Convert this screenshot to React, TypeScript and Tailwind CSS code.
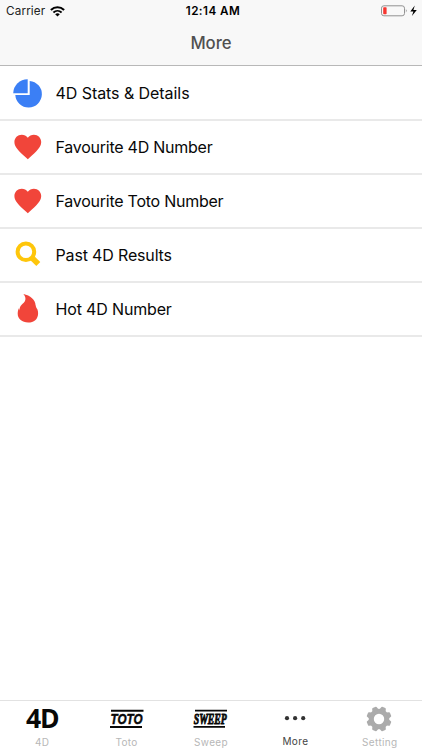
import React from "react";

const Pie = () => (
  <svg width="32" height="32" viewBox="0 0 32 32" fill="#3b7ff5">
    <path d="M15.7 2.2V16.2H1.2A14.3 14.3 0 0 1 15.7 2.2Z" />
    <path d="M17.7 3.9A13.3 13.3 0 1 1 3.3 18H17.7Z" />
  </svg>
);

const Heart = () => (
  <svg width="32" height="32" viewBox="0 0 32 32" fill="#f1453a">
    <path d="M15.8 28.2L13.9 26.5C7 20.4 2.4 16.2 2.4 11.1C2.4 6.9 5.6 3.8 9.8 3.8C12.1 3.8 14.4 4.9 15.8 6.7C17.3 4.9 19.5 3.8 21.9 3.8C26 3.8 29.2 6.9 29.2 11.1C29.2 16.2 24.6 20.4 17.7 26.5Z" />
  </svg>
);

const Search = () => (
  <svg width="32" height="32" viewBox="0 0 32 32" fill="none" stroke="#fec60b">
    <circle cx="13.9" cy="12.8" r="8.3" strokeWidth="4" />
    <path d="M19.4 18.2L26.3 25.1" strokeWidth="5.6" />
  </svg>
);

const Flame = () => (
  <svg width="32" height="32" viewBox="0 0 32 32" fill="#f1453a">
    <path d="M11.4 1C18.2 2.3 23.6 6.9 23.6 12.6C23.6 14.2 23 15.4 23.2 17.2C24.2 16.6 24.5 16 24.6 15.1C25.6 16.6 26.1 18.5 26.1 20.4C26.1 26.2 21.9 29.5 16.1 29.5C10.2 29.5 5.7 26.1 5.7 20.8C5.7 18.6 6.1 16.9 6.9 15.3L7.5 17.5C7.4 12 11.6 11 13 8C14.2 5.4 13 2.8 11.4 1Z" />
    <path d="M21 9C24 13 24.6 15 25.3 17L23 20L19 16Z" />
  </svg>
);

const rows = [
  { icon: <Pie />, label: "4D Stats & Details", tracking: "tracking-[-0.06px]" },
  { icon: <Heart />, label: "Favourite 4D Number", tracking: "tracking-[-0.25px]" },
  { icon: <Heart />, label: "Favourite Toto Number", tracking: "tracking-[-0.25px]" },
  { icon: <Search />, label: "Past 4D Results", tracking: "tracking-[-0.16px]" },
  { icon: <Flame />, label: "Hot 4D Number", tracking: "tracking-[-0.16px]" },
];

const Gear = () => {
  const points = Array.from({ length: 8 }, (_, i) => i * 45);
  return (
    <svg className="mr-[1.4px]" width="26" height="26" viewBox="-13 -13 26 26" fill="#ababab">
      <path
        fillRule="evenodd"
        d="M0-10.3A10.3 10.3 0 1 1 0 10.3A10.3 10.3 0 1 1 0-10.3ZM0-5.2A5.2 5.2 0 1 0 0 5.2A5.2 5.2 0 1 0 0-5.2Z"
      />
      {points.map((a) => (
        <path key={a} transform={`rotate(${a + 22.5})`} d="M-3.4-9L-2.5-11.8Q-2.3-12.5-1.6-12.5H1.6Q2.3-12.5 2.5-11.8L3.4-9Z" />
      ))}
    </svg>
  );
};

const Wordmark = ({ text, serif }: { text: string; serif?: boolean }) => (
  <svg width="44" height="24" viewBox="-4 -2 44 24" overflow="visible">
    <path d={serif ? "M2 1.6H34M.5 17.9H32" : "M2 1.7H34.5M1 18H33"} stroke="#080808" strokeWidth="1.9" />
    <text
      x={serif ? ".8" : "1.5"}
      y="14.9"
      textLength={serif ? "33" : "32"}
      lengthAdjust="spacingAndGlyphs"
      fontFamily={serif ? "Liberation Serif, serif" : "Liberation Sans, sans-serif"}
      fontSize="15.5"
      fontWeight="700"
      fontStyle="italic"
      fill="#080808"
      stroke="#080808"
      strokeWidth={serif ? ".9" : ".5"}
    >
      {text}
    </text>
  </svg>
);

const tabs = [
  {
    label: "4D",
    icon: <span className="font-['Open_Sans',sans-serif] text-[26.5px] font-bold leading-[35px] tracking-[-1.2px] text-[#080808]">4D</span>,
  },
  { label: "Toto", icon: <Wordmark text="TOTO" /> },
  { label: "Sweep", icon: <Wordmark text="SWEEP" serif /> },
  {
    label: "More",
    active: true,
    icon: (
      <svg width="24" height="8" viewBox="0 0 24 8" fill="#333">
        <circle cx="4" cy="3.2" r="2.1" /><circle cx="12.1" cy="3.2" r="2.1" /><circle cx="20.2" cy="3.2" r="2.1" />
      </svg>
    ),
  },
  { label: "Setting", icon: <Gear /> },
];

export default function App() {
  return (
    <div className="flex h-[750px] w-[422px] flex-col overflow-hidden bg-white font-['Inter',sans-serif] text-black">
      <header className="flex h-[66px] shrink-0 flex-col border-b border-[#b8b8b8] bg-[#f8f8f8]">
        <div className="grid h-[22px] grid-cols-3 items-center px-[6px]">
          <div className="flex items-center gap-[5px] text-[11.7px] leading-[22px] tracking-[0.15px] text-[#222]">
            <span>Carrier</span>
            <svg width="15" height="11" viewBox="0 0 15 11" fill="none" stroke="#000">
              <path d="M.9 4C4.7.3 10.3.3 14.1 4" strokeWidth="2.1" />
              <path d="M3.4 6.5C5.8 4.3 9.2 4.3 11.6 6.5" strokeWidth="1.9" />
              <path d="M5.2 8.2Q7.5 6.2 9.8 8.2L7.5 10.5Z" fill="#000" stroke="none" />
            </svg>
          </div>
          <div className="pl-[4px] text-center text-[11.7px] font-semibold leading-[22px] tracking-[0.45px]">12:14 AM</div>
          <svg className="-mr-[2px] justify-self-end" width="37" height="14" viewBox="0 0 37 14">
            <rect x="0.5" y="1.8" width="23" height="10" rx="2.4" fill="none" stroke="#929292" />
            <rect x="2.2" y="3.3" width="3.4" height="7" rx=".7" fill="#f7352f" />
            <path d="M24.9 5.1Q26.6 6.8 24.9 8.5Z" fill="#888" />
            <path d="M33.8 1.5L29.3 7.4H32.4L30.9 12L35.8 5.9H32.4Z" fill="#000" />
          </svg>
        </div>
        <h1 className="pt-[5px] text-center text-[16.7px] font-medium leading-[32px] text-[#505050]">More</h1>
      </header>
      <main className="flex-1">
        {rows.map((r) => (
          <div key={r.label} className="flex h-[54px] items-center border-b-2 border-[#e9e9e9] pl-3 first:h-[55px] first:pt-px">
            {r.icon}
            <span className={`-mt-px ml-[11.5px] text-[16px] leading-6 text-[#080808] ${r.tracking}`}>{r.label}</span>
          </div>
        ))}
      </main>
      <nav className="grid h-[50px] shrink-0 grid-cols-5 border-t border-[#e2e2e2] bg-white">
        {tabs.map((t) => (
          <div key={t.label} className="flex flex-col items-center">
            <div className="flex h-[35px] items-center">{t.icon}</div>
            <span className={`text-[10px] leading-[12px] tracking-[0.35px] ${t.active ? "-mt-px text-[#444]" : "text-[#b7b7b7]"}`}>{t.label}</span>
          </div>
        ))}
      </nav>
    </div>
  );
}
